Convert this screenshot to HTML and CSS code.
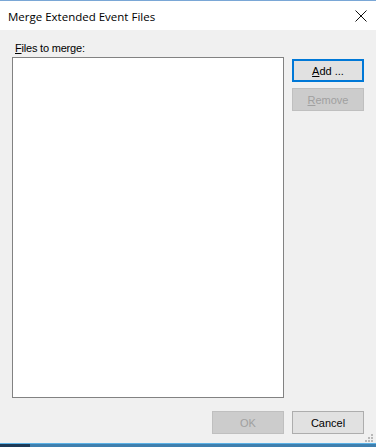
FILE: index.html
```html
<!DOCTYPE html>
<html lang="en">
<head>
    <meta charset="UTF-8">
    <meta name="viewport" content="width=device-width, initial-scale=1.0">
    <title>Merge Extended Event Files</title>
    <link rel="stylesheet" href="styles.css">
</head>
<body>
    <div class="window">
        <div class="titlebar">
            <span class="title">Merge Extended Event Files</span>
            <svg class="close" width="12" height="12" viewBox="0 0 12 12">
                <path d="M0.5 0.5 L11.5 11.5 M11.5 0.5 L0.5 11.5" stroke="#111" stroke-width="1" fill="none"/>
            </svg>
        </div>
        <div class="content">
            <div class="label"><u>F</u>iles to merge:</div>
            <div class="main">
                <div class="filelist"></div>
                <div class="side">
                    <button class="btn btn-default"><u>A</u>dd ...</button>
                    <button class="btn" disabled><u>R</u>emove</button>
                </div>
            </div>
            <div class="footer">
                <button class="btn" disabled>OK</button>
                <button class="btn">Cancel</button>
            </div>
            <svg class="grip" width="8" height="8" viewBox="0 0 8 8">
                <rect x="6" y="0" width="2" height="2" fill="#b8b8b8"/>
                <rect x="3" y="3" width="2" height="2" fill="#b8b8b8"/>
                <rect x="6" y="3" width="2" height="2" fill="#b8b8b8"/>
                <rect x="0" y="6" width="2" height="2" fill="#b8b8b8"/>
                <rect x="3" y="6" width="2" height="2" fill="#b8b8b8"/>
                <rect x="6" y="6" width="2" height="2" fill="#b8b8b8"/>
            </svg>
        </div>
        <div class="taskbar">
            <div class="task-start"></div>
            <div class="task-rest"></div>
        </div>
    </div>
</body>
</html>
```

FILE: styles.css
```css
body {
    margin: 0;
    padding: 0;
    font-family: "Liberation Sans", Arial, sans-serif;
    font-size: 11px;
    background-color: #f0f0f0;
}

.window {
    width: 376px;
    height: 447px;
    display: flex;
    flex-direction: column;
    overflow: hidden;
}

.titlebar {
    height: 29px;
    border-top: 1px solid #7aa7d6;
    background-color: #fff;
    display: flex;
    align-items: center;
    justify-content: space-between;
    padding: 0 8px 0 8px;
}

.title {
    font-family: "Open Sans", "Noto Sans", sans-serif;
    font-size: 11.5px;
    color: #000;
    margin-top: 1px;
}

.close {
    margin-right: 1px;
    margin-top: 1px;
}

.content {
    position: relative;
    flex: 1;
    display: flex;
    flex-direction: column;
    padding: 12px 12px 0 12px;
}

.label {
    padding-left: 3px;
    height: 15px;
    line-height: 13px;
    color: #000;
    letter-spacing: -0.2px;
}

.main {
    display: flex;
    gap: 8px;
}

.filelist {
    width: 270px;
    height: 339px;
    background-color: #fff;
    border: 1px solid #828282;
}

.side {
    display: flex;
    flex-direction: column;
    gap: 6px;
    padding-top: 2px;
}

.btn {
    width: 72px;
    height: 23px;
    padding: 0;
    font-family: "Liberation Sans", Arial, sans-serif;
    font-size: 11px;
    color: #000;
    background-color: #e1e1e1;
    border: 1px solid #adadad;
    border-radius: 0;
}

.btn-default {
    border: 1px solid #0078d7;
    box-shadow: inset 0 0 0 1px #0078d7;
}

.btn:disabled {
    background-color: #cccccc;
    border-color: #bfbfbf;
    color: #a0a0a0;
}

.footer {
    display: flex;
    justify-content: flex-end;
    gap: 8px;
    margin-top: 13px;
}

.grip {
    position: absolute;
    right: 3px;
    bottom: 1px;
}

.taskbar {
    height: 3px;
    border-top: 1px solid #5cb2e6;
    display: flex;
}

.task-start {
    width: 30px;
    background-color: #1d3a57;
}

.task-rest {
    flex: 1;
    background-color: #3f7fae;
}
```
